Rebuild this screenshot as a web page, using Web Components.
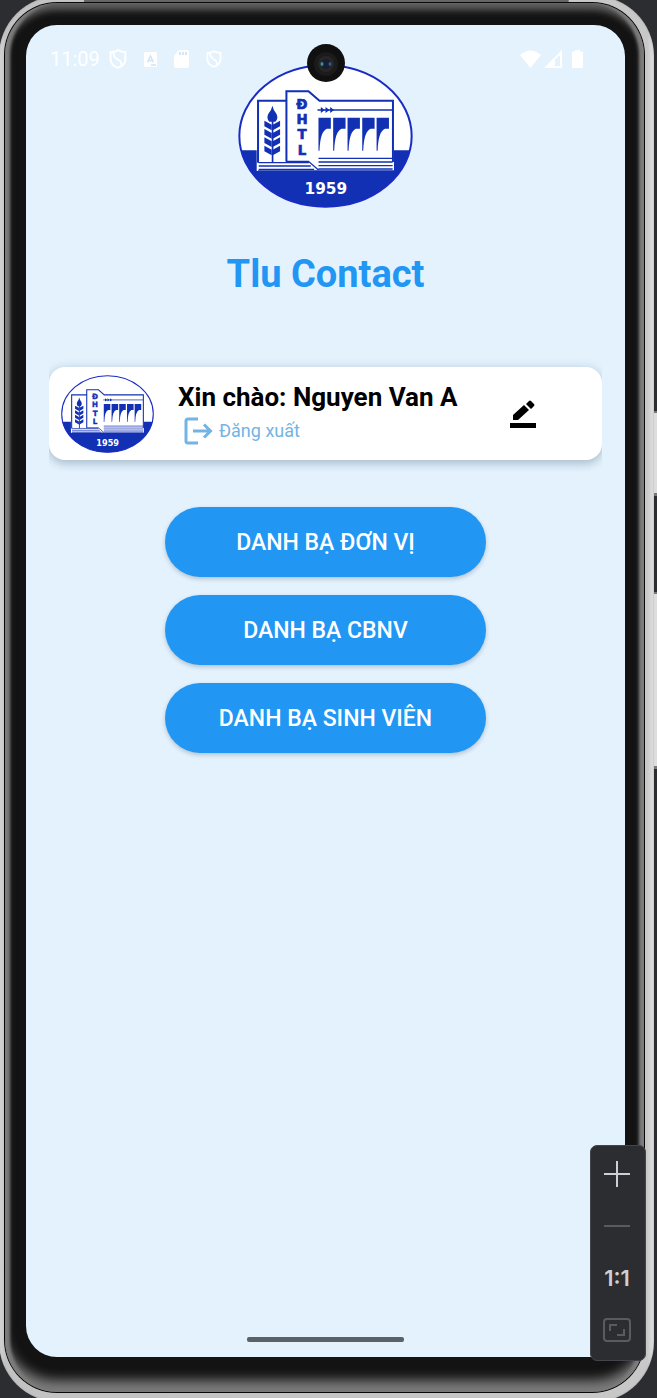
<!DOCTYPE html>
<html lang="vi">
<head>
<meta charset="utf-8">
<meta name="viewport" content="width=device-width, initial-scale=1">
<title>Tlu Contact</title>
<style>
  html, body { margin: 0; }
  body { background: #2b2d30; font-family: Roboto, "Noto Sans", sans-serif; }
</style>
</head>
<body>
<emulator-window>
  <device-frame>
    <status-bar slot="overlay"></status-bar>
    <tlu-logo class="brand"></tlu-logo>
    <app-title>Tlu Contact</app-title>
    <user-card name="Nguyen Van A"></user-card>
    <contact-menu>
      <menu-button>DANH BẠ ĐƠN VỊ</menu-button>
      <menu-button>DANH BẠ CBNV</menu-button>
      <menu-button>DANH BẠ SINH VIÊN</menu-button>
    </contact-menu>
  </device-frame>
  <zoom-panel slot="tools"></zoom-panel>
</emulator-window>

<script>
const define = (tag, markup) => customElements.define(tag, class extends HTMLElement {
  constructor() {
    super();
    const t = document.createElement('template');
    t.innerHTML = typeof markup === 'function' ? markup(this) : markup;
    this.attachShadow({ mode: 'open' }).append(t.content.cloneNode(true));
  }
});

define('emulator-window', `
<style>
  :host { display: flex; position: relative; min-height: 100vh; overflow: hidden; }
  ::slotted(zoom-panel) { position: absolute; right: 11px; bottom: 37px; }
  .key { position: absolute; right: 0; width: 3px; box-sizing: border-box; background: #ddd; border-top: 2px solid #777; border-bottom: 3px solid #777; }
  .power { top: 411px; height: 85px; }
  .volume { top: 592px; height: 177px; }
</style>
<div class="key power"></div><div class="key volume"></div>
<slot></slot><slot name="tools"></slot>`);

define('device-frame', `
<style>
  :host { display: flex; flex: 1; margin: -4px 3px -4px -1px; padding: 6px 9px 9px 5px; border-radius: 60px;
    background: linear-gradient(#666 8px, transparent 8px) 50% 0 / 74% 8px no-repeat, linear-gradient(90deg, #d8d8d8, #c2c2c2 1%, #c8c8c8 99%, #e4e4e4);
    box-shadow: inset 0 0 2px #999; }
  .rim { display: flex; flex: 1; padding: 1px; border-radius: 53px; background: #080808; }
  .bezel { display: flex; flex: 1; padding: 22px 19px 35px 21px; border-radius: 52px; background: #131313;
    box-shadow: inset 6px 0 3px -1px #7c7c7c, inset -6px 0 3px -1px #7c7c7c, inset 0 8px 7px -1px #606060, inset 0 -14px 12px -2px #7c7c7c; }
  .screen { position: relative; display: flex; flex: 1; flex-direction: column; align-items: center; box-sizing: border-box;
    padding: 39px 23px 0; border-radius: 31px; background: #e3f2fd; }
  ::slotted(*) { flex: none; }
  ::slotted(.brand) { width: 175px; height: 144px; }
  ::slotted(app-title) { margin-top: 43px; }
  ::slotted(user-card) { margin-top: 70px; align-self: stretch; }
  ::slotted(contact-menu) { margin-top: 47px; }
  ::slotted(status-bar) { position: absolute; inset: 22px 24px auto; }
  .camera { position: absolute; top: 19px; left: 50%; width: 38px; height: 38px; transform: translateX(-50%); }
  .home { width: 157px; height: 5px; margin: auto 0 15px; border-radius: 2px; background: #5b6267; }
</style>
<div class="rim"><div class="bezel"><main class="screen">
  <slot></slot>
  <slot name="overlay"></slot>
  <svg class="camera" viewBox="0 0 38 38" aria-hidden="true">
    <circle cx="19" cy="19" r="19" fill="#101010"/><circle cx="19" cy="20" r="12" fill="#1b1b1c"/>
    <circle cx="19" cy="20" r="8" fill="#262628"/><circle cx="19" cy="20" r="5" fill="#161f30"/>
    <ellipse cx="15" cy="20" rx="1.5" ry="2" fill="#3b8b9c"/><ellipse cx="23" cy="20" rx="1.5" ry="2" fill="#34568e"/>
  </svg>
  <div class="home"></div>
</main></div></div>`);

const shield = `<svg width="18" height="20" viewBox="0 0 18 20"><path d="M9 1.200C6.500 2.700 4 3 1.600 3.200V10c0 4.300 3 7.400 7.400 8.800 4.400-1.400 7.400-4.500 7.400-8.800V3.200C14 3 11.500 2.700 9 1.200ZM4.500 3.500c0 5 2 5.500 4.500 7s4 3.500 3.500 6" fill="none" stroke="#fff" stroke-width="2"/></svg>`;
define('status-bar', `
<style>
  :host { display: flex; align-items: center; justify-content: space-between; height: 24px; color: #fff; font-size: 20px; line-height: 24px; }
  .side { display: flex; align-items: center; }
  .side svg { display: block; flex: none; }
  .notes { display: flex; align-items: center; gap: 17px; margin-left: 9px; }
  .signals { gap: 3px; margin-right: 18px; }
  .signals svg:last-child { margin-left: 7px; }
</style>
<div class="side"><span>11:09</span><div class="notes">
  ${shield}
  <svg width="13" height="15" viewBox="0 0 13 15"><rect width="13" height="15" rx="1" fill="#fff"/><path d="M3.500 10.500 6.500 4l3 6.500M4.500 8.500h4M7 13h5" fill="none" stroke="#cfe3f2" stroke-width="1.400"/></svg>
  <svg width="15" height="18" viewBox="0 0 15 18"><path d="M5 0h8q2 0 2 2v14q0 2-2 2H2q-2 0-2-2V6z" fill="#fff"/><path d="M5 2h2v3H5zm3 0h2v3H8zm3 0h2v3h-2z" fill="#d3e6f5"/></svg>
  ${shield.replace('width="18" height="20"', 'width="16" height="18"')}
</div></div>
<div class="side signals">
  <svg width="21" height="18" viewBox="0 0 21 18"><path d="M0 5q10.500-9 21 0L10.500 18z" fill="#fff"/></svg>
  <svg width="18" height="18" viewBox="0 0 18 18"><path d="M18 0v18H0z" fill="#fff"/><path d="M11 9.500 16 5v11h-5z" fill="#e3f2fd"/></svg>
  <svg width="11" height="18" viewBox="0 0 11 18"><path d="M3 0h5v1.500h2q1 0 1 1V17q0 1-1 1H1q-1 0-1-1V2.500q0-1 1-1h2z" fill="#fff"/></svg>
</div>`);

const leaves = [272, 297, 322, 347].map(y =>
  `<path d="M119 ${y}l22 12v17l-22-12zM166 ${y}l-22 12v17l22-12z"/>`).join('');
const gates = [281, 325, 368, 412, 455].map(x =>
  `<path d="M${x} 263h37v33h-12q-20 8-22 66h-3z"/>`).join('');
define('tlu-logo', `
<style>:host { display: block; } svg { display: block; width: 100%; height: 100%; }
 text { font-family: "DejaVu Sans", sans-serif; font-weight: 700; text-anchor: middle; }</style>
<svg viewBox="40 102 524 432" preserveAspectRatio="none" role="img" aria-label="ĐHTL 1959">
  <defs><clipPath id="oval"><ellipse cx="302" cy="318" rx="259" ry="213"/></clipPath></defs>
  <g clip-path="url(#oval)"><path fill="#fff" d="M40 102h524v432H40z"/><path fill="#1230b4" d="M40 361h524v173H40z"/></g>
  <ellipse cx="302" cy="318" rx="258" ry="212" fill="none" stroke="#1a2bc4" stroke-width="6"/>
  <path d="M96 210h88v-28h68l33 29h222v212H96z" fill="#fff"/>
  <path d="M100 398V212h84M185 394V184h66l33 28h220v184" fill="none" stroke="#1230b4" stroke-width="6"/>
  <path d="M183 394h68l30 26M102 398h150M102 408h156M102 418h166M281 385h222M281 396h222M281 407h222M281 417h222" fill="none" stroke="#1230b4" stroke-width="4"/>
  <path d="M100 423h407" stroke="#1230b4" stroke-width="5"/>
  <path d="M278 240h224" stroke="#1230b4" stroke-width="4"/>
  <g fill="#1230b4"><path d="m288 231 12 9-12 9zm14 0 12 9-12 9zm14 0 12 9-12 9z"/>
  <path d="M143 227q3 15 12 24q7 14-3 24h-18q-10-10-3-24q9-9 12-24z"/><path d="M141 270h5v127h-5z"/>${leaves}${gates}
  <g font-size="40" stroke="#1230b4" stroke-width="2"><text x="231" y="237">Đ</text><text x="232" y="282">H</text><text x="232" y="328">T</text><text x="232" y="374">L</text></g></g>
  <text x="303" y="493" font-size="46" fill="#fff">1959</text>
</svg>`);

define('app-title', `
<style>:host { display: block; } h1 { margin: 0; color: #2196f3; font-size: 38px; line-height: 46px; font-weight: 700; }</style>
<h1><slot></slot></h1>`);

define('user-card', el => `
<style>
  :host { display: block; clip-path: inset(-12px 0 -16px 0); }
  .card { display: flex; align-items: center; gap: 24px; box-sizing: border-box; min-height: 93px; padding: 4px 66px 4px 12px; border-radius: 16px; background: #fff;
    box-shadow: 0 4px 8px rgba(30,60,80,.2), 0 1px 12px rgba(30,60,80,.13); }
  tlu-logo { flex: none; width: 93px; height: 78px; }
  .info { flex: 1; padding-bottom: 2px; }
  h2 { margin: 0; font-size: 26px; line-height: 32px; font-weight: 700; color: #000; }
  button { display: flex; align-items: center; margin: 0; padding: 0; border: 0; background: none; font: inherit; cursor: pointer; }
  .logout { gap: 6px; margin: 4px 0 0 6px; color: #72b4e4; font-size: 18px; line-height: 28px; }
  svg { display: block; flex: none; }
</style>
<section class="card">
  <tlu-logo></tlu-logo>
  <div class="info"><h2>Xin chào: ${el.getAttribute('name')}</h2>
    <button class="logout"><svg width="29" height="28" viewBox="0 0 29 28"><path d="M14 2H4q-2 0-2 2v20q0 2 2 2h10M9 14h18M20 7.500l6.500 6.500-6.500 6.500" fill="none" stroke="#72b4e4" stroke-width="3"/></svg>Đăng xuất</button>
  </div>
  <button class="edit" aria-label="Sửa"><svg width="26" height="28" viewBox="0 0 26 28"><path d="M0 23h26v5H0zM3 20v-5L14 5l5 5L8 20zM16 4l3-3q1-1 2 0l3 3q1 1 0 2l-3 3z"/></svg></button>
</section>`);

define('contact-menu', `
<style>:host { display: flex; flex-direction: column; gap: 18px; width: 321px; max-width: 100%; }</style>
<slot></slot>`);

define('menu-button', `
<style>:host { display: block; }
 button { display: block; width: 100%; height: 70px; padding: 2px 16px 0; border: 0; border-radius: 35px; background: #2196f3; color: #fff;
   font: 500 23px/28px Roboto, "Noto Sans", sans-serif; box-shadow: 0 2px 4px rgba(30,50,70,.25); cursor: pointer; }</style>
<button><slot></slot></button>`);

define('zoom-panel', `
<style>
  :host { display: flex; flex-direction: column; box-sizing: border-box; width: 56px; padding: 2px 2px 4px 0; border: 1px solid #43454a; border-radius: 7px; background: #2b2d30; }
  button { display: flex; align-items: center; justify-content: center; height: 52px; margin: 0; padding: 0; border: 0; background: none; color: #ced0d6; font: 600 22px/28px Inter, sans-serif; }
</style>
<button aria-label="Phóng to"><svg width="26" height="26"><path d="M0 13h26M13 0v26" stroke="#ced0d6" stroke-width="2"/></svg></button>
<button aria-label="Thu nhỏ" disabled><svg width="26" height="26"><path d="M0 13h26" stroke="#5a5b5d" stroke-width="2"/></svg></button>
<button>1:1</button>
<button aria-label="Vừa màn hình" disabled><svg width="28" height="24" viewBox="0 0 28 24" fill="none" stroke="#5a5b5d" stroke-width="2"><rect x="1" y="1" width="26" height="22" rx="3"/><path d="M7 13V7h7M21 11v6h-7"/></svg></button>`);
</script>
</body>
</html>
